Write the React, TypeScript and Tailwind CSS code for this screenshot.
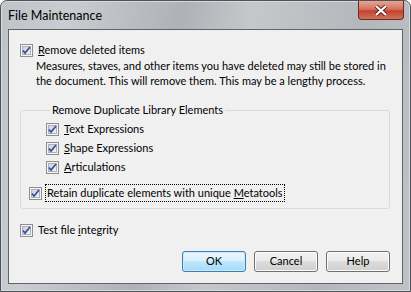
import React from 'react';

function Check({ checked = true }: { checked?: boolean }) {
    return (
        <svg width="13" height="13" viewBox="0 0 13 13" className="shrink-0">
            <defs>
                <linearGradient id="cbg" x1="0" y1="0" x2="1" y2="1">
                    <stop offset="0" stopColor="#cbcfd5" />
                    <stop offset="1" stopColor="#f6f6f6" />
                </linearGradient>
            </defs>
            <rect x="0.5" y="0.5" width="12" height="12" fill="#f4f4f4" stroke="#8e8f8f" />
            <rect x="2.5" y="2.5" width="8" height="8" fill="url(#cbg)" stroke="#aeb3b9" />
            {checked && (
                <path d="M3 6.5 L5 9 L10 3" fill="none" stroke="#3c4fa0" strokeWidth="1.8" />
            )}
        </svg>
    );
}

function CheckRow({ children, focus = false }: { children: React.ReactNode; focus?: boolean }) {
    return (
        <div className="flex items-center gap-[3px]">
            <Check />
            <span className={focus ? 'border border-dotted border-black px-[1px] leading-[16px]' : 'px-[2px] leading-[18px]'}>
                {children}
            </span>
        </div>
    );
}

function WinButton({ label, primary = false }: { label: string; primary?: boolean }) {
    return (
        <button
            className={`w-[64px] h-[21px] rounded-[3px] border text-[11px] text-black ${primary
                ? 'border-[#3c7fb1] bg-[linear-gradient(#eaf6fd_0%,#d9f0fc_50%,#bee6fd_50%,#a7d9f5_100%)] shadow-[inset_0_0_0_1px_#c8eafb]'
                : 'border-[#707070] bg-[linear-gradient(#f2f2f2_0%,#ebebeb_50%,#dddddd_50%,#cfcfcf_100%)] shadow-[inset_0_0_0_1px_#fcfcfc]'
                }`}
        >
            {label}
        </button>
    );
}

export default function App() {
    return (
        <div
            className="w-[411px] h-[292px] bg-white"
            style={{ fontFamily: 'Lato, "Liberation Sans", Arial, sans-serif' }}
        >
            <div className="w-[411px] h-[292px] rounded-t-[7px] border border-[#4e5359] bg-[linear-gradient(100deg,#bfc3c7_0%,#c9ccd0_15%,#aeb2b6_40%,#c5c8cb_55%,#b3b7bb_80%,#c0c3c6_100%)] flex flex-col shadow-[inset_0_0_0_1px_#d8dbde]">
                {/* Title bar */}
                <div className="h-[28px] flex items-start justify-between shrink-0">
                    <div className="pl-[7px] pt-[6px] text-[12.5px] text-black">File Maintenance</div>
                    <div className="mr-[6px] w-[46px] h-[19px] rounded-b-[4px] border border-t-0 border-[#6b2b22] bg-[linear-gradient(#e8a493_0%,#d27460_45%,#c4412b_55%,#d0735b_100%)] flex items-center justify-center">
                        <svg width="14" height="11" viewBox="0 0 14 11">
                            <path d="M2 1 L12 10 M12 1 L2 10" stroke="#5c2018" strokeWidth="4" />
                            <path d="M2 1 L12 10 M12 1 L2 10" stroke="#ffffff" strokeWidth="2.2" />
                        </svg>
                    </div>
                </div>

                {/* Client area */}
                <div className="mx-[7px] mb-[7px] flex-1 border border-[#5f646a] bg-[#f0f0f0] text-[11px] text-black flex flex-col pl-[11px] pr-[12px] pt-[11px]">
                    <CheckRow>
                        <u>R</u>emove deleted items
                    </CheckRow>
                    <p className="pl-[16px] leading-[15px] -mt-[1px] whitespace-nowrap">
                        Measures, staves, and other items you have deleted may still be stored in
                        <br />
                        the document. This will remove them. This may be a lengthy process.
                    </p>

                    <fieldset className="mt-[15px] border border-[#d5dbe0] rounded-[3px] pl-[25px] pr-[4px] pb-[6px]">
                        <legend className="ml-[4px] px-[2px] leading-[14px]">Remove Duplicate Library Elements</legend>
                        <div className="flex flex-col gap-[1px] mt-[3px]">
                            <CheckRow>
                                <u>T</u>ext Expressions
                            </CheckRow>
                            <CheckRow>
                                <u>S</u>hape Expressions
                            </CheckRow>
                            <CheckRow>
                                <u>A</u>rticulations
                            </CheckRow>
                        </div>
                        <div className="-ml-[17px] mt-[8px]">
                            <CheckRow focus>
                                Retain duplicate elements with unique <u>M</u>etatools
                            </CheckRow>
                        </div>
                    </fieldset>

                    <div className="mt-[12px]">
                        <CheckRow>
                            Test file <u>i</u>ntegrity
                        </CheckRow>
                    </div>

                    <div className="mt-[12px] flex justify-end gap-[8px]">
                        <WinButton label="OK" primary />
                        <WinButton label="Cancel" />
                        <WinButton label="Help" />
                    </div>
                </div>
            </div>
        </div>
    );
}
